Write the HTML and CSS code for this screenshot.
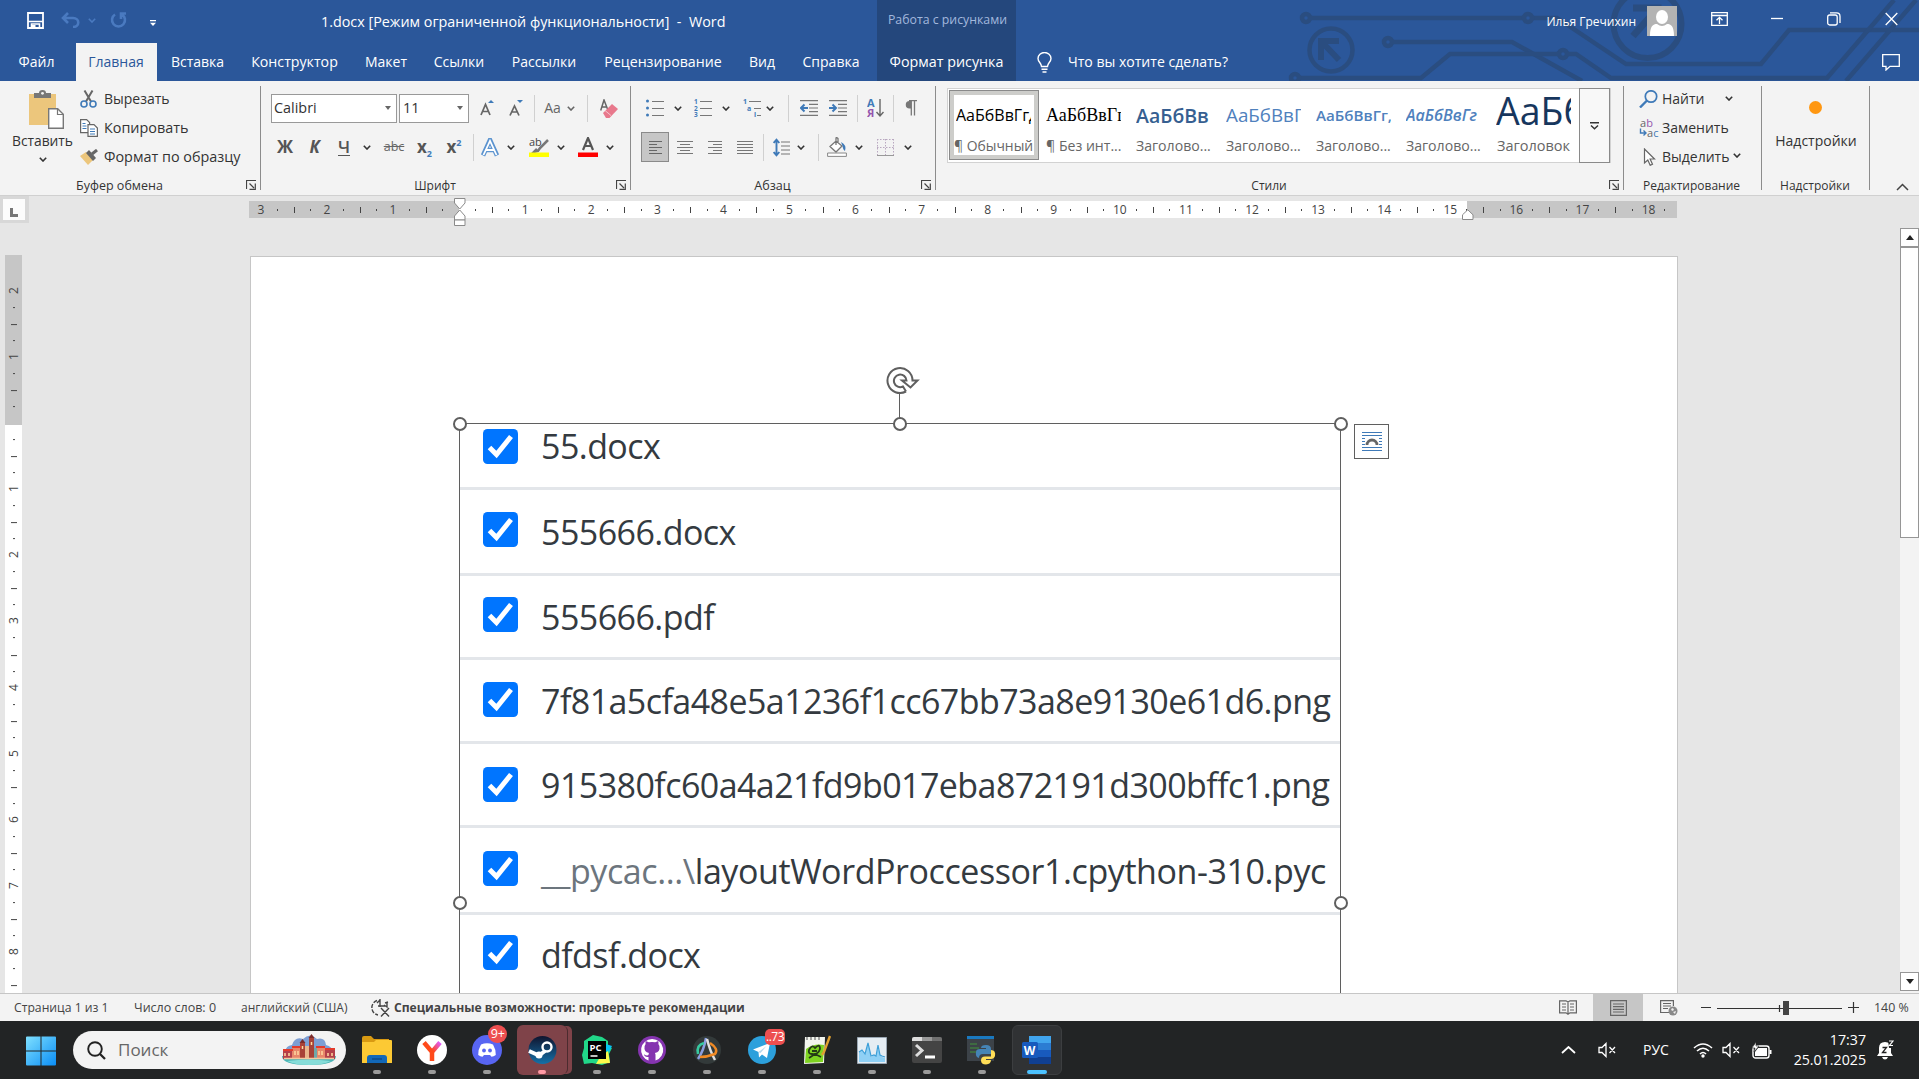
FILE: index.html
```html
<!DOCTYPE html>
<html lang="ru">
<head>
<meta charset="utf-8">
<title>1.docx - Word</title>
<link rel="stylesheet" href="styles.css">
</head>
<body>
<svg class="defs" width="0" height="0">
  <symbol id="chev" viewBox="0 0 8 5"><path d="M.8.8 4 4 7.2.8" fill="none" stroke="currentColor" stroke-width="1.6"/></symbol>
  <symbol id="launch" viewBox="0 0 10 10"><path d="M.5 9V.5H10M3.5 3.5 8 8M9.3 3.5v5.8H3.5" fill="none" stroke="#444" stroke-width="1.2"/></symbol>
  <symbol id="check" viewBox="0 0 35 35"><rect width="35" height="35" rx="4.5" fill="#0075ff"/><path d="M6.5 18.5 13.5 25.5 28 7.5" fill="none" stroke="#fff" stroke-width="5"/></symbol>
  <symbol id="mute" viewBox="0 0 18 16"><path d="M1 5.5h3L8 1.5v13L4 10.5H1ZM11.5 5l5.500 6M17 5l-5.500 6" fill="none" stroke="#fff" stroke-width="1.3"/></symbol>
</svg>

<header class="header">
  <svg class="circuit" width="649" height="81" viewBox="1270 0 649 81">
    <g fill="none" stroke="#2a4d80" stroke-width="4.5">
      <circle cx="1306" cy="18" r="4"/><path d="M1310 18H1524M1532 18H1557L1626 64H1761L1789 30H1919"/><circle cx="1528" cy="18" r="4"/>
      <circle cx="1388" cy="42" r="4"/><path d="M1392 42H1512L1582 81"/>
      <circle cx="1563" cy="54" r="4"/><path d="M1559 54H1450L1421 78H1299M1567 54H1576L1611 78H1827L1894 0M1846 81 1916 0"/><circle cx="1295" cy="78" r="4"/>
      <circle cx="1331" cy="50" r="21.5"/><circle cx="1647.5" cy="24" r="34" stroke-width="6"/>
      <path d="M1321 60V41H1339M1321 41 1339 60" stroke-width="6"/>
      <path d="M1633 8H1658V30M1657 9 1633 36" stroke-width="7"/>
    </g>
  </svg>
  <div class="titlebar">
    <div class="qat">
      <svg width="17" height="17" viewBox="0 0 17 17"><path d="M1 1h15v15H1z" fill="none" stroke="#fff" stroke-width="1.8"/><path d="M1 9.5h15M4.5 16v-4h8v4" fill="none" stroke="#fff" stroke-width="1.6"/><path d="M5 13h3.500v3H5z" fill="#fff"/></svg>
      <svg width="19" height="16" viewBox="0 0 19 16"><path d="M7 1 2 6l5 5M2.5 6H12c7 0 7 9 0 9" fill="none" stroke="#4a7ac0" stroke-width="2.6"/></svg>
      <svg class="dim" width="8" height="5"><use href="#chev"/></svg>
      <svg width="17" height="16" viewBox="0 0 17 16"><path d="M5 2.5A6.5 6.5 0 1 0 12 2.500M16 1.500H11V7" fill="none" stroke="#4a7ac0" stroke-width="2.6"/></svg>
      <svg width="6" height="6" viewBox="0 0 6 6"><path d="M0 0h6v1.300H0zM0 2.800h6L3 6z" fill="#fff"/></svg>
    </div>
    <div class="doc-title">1.docx [Режим ограниченной функциональности]&nbsp; -&nbsp; Word</div>
    <div class="context-title">Работа с рисунками</div>
    <div class="account">Илья Гречихин</div>
    <svg class="avatar" width="30" height="30" viewBox="0 0 30 30"><path fill="#b3b3b3" d="M0 0h30v30H0z"/><ellipse cx="15" cy="11" rx="6" ry="7" fill="#fff"/><path d="M3 30c0-10 3-12 7-12q5 4 10 0c4 0 7 2 7 12z" fill="#fff"/></svg>
    <svg class="win-opts" width="17" height="14" viewBox="0 0 17 14"><path d="M.7.7h15.600v12.600H.7zM.7 3.500h15.600M8.500 12V5.500M5.500 8.300l3-3 3 3" fill="none" stroke="#fff" stroke-width="1.3"/></svg>
    <svg class="win-min" width="12" height="14"><path d="M0 6.5h12" stroke="#fff" stroke-width="1.3"/></svg>
    <svg class="win-max" width="14" height="14" viewBox="0 0 14 14"><rect x=".7" y="3" width="9.5" height="10" rx="2" fill="none" stroke="#fff" stroke-width="1.3"/><path d="M3 .9h6.500q3.500 0 3.500 3.500V11" fill="none" stroke="#fff" stroke-width="1.3"/></svg>
    <svg class="win-close" width="13" height="14" viewBox="0 0 13 14"><path d="m.7 1 11.600 12M12.300 1 .7 13" stroke="#fff" stroke-width="1.3"/></svg>
  </div>
  <nav class="tabs">
    <span>Файл</span><span class="active">Главная</span><span>Вставка</span><span>Конструктор</span><span>Макет</span><span>Ссылки</span><span>Рассылки</span><span>Рецензирование</span><span>Вид</span><span>Справка</span><span class="context">Формат рисунка</span>
    <svg class="bulb" width="15" height="21" viewBox="0 0 15 21"><path d="M4.500 14.500C4.500 11 1 10 1 6.500a6.500 6 0 0 1 13 0C14 10 10.500 11 10.500 14.500ZM4.500 17.300h6M5.500 20h4" fill="none" stroke="#fff" stroke-width="1.4"/></svg>
    <div class="tellme">Что вы хотите сделать?</div>
    <svg class="comment" width="18" height="17" viewBox="0 0 18 17"><path d="M.7.7h16.600v11.600H8L4 16v-3.700H.7z" fill="none" stroke="#fff" stroke-width="1.3"/></svg>
  </nav>
</header>

<section class="ribbon">
  <div class="group g-clip">
    <div class="body">
      <div class="paste">
        <svg width="35" height="39" viewBox="0 0 35 39"><path d="M0 4h27v31H0z" fill="#ecc67c"/><path d="M5 8V3h5q0-3 3.500-3T17 3h5v5z" fill="#777"/><circle cx="13.500" cy="3.300" r="1.400" fill="#f3f3f3"/><path d="M19.700 18.700h9l5.600 5.600v14H19.700z" fill="#fff" stroke="#777" stroke-width="1.4"/><path d="M28.500 19v5.500H34" fill="none" stroke="#777" stroke-width="1.2"/></svg>
        <span>Вставить</span>
        <svg width="8" height="5"><use href="#chev"/></svg>
      </div>
      <div class="list">
        <div><svg width="18" height="18" viewBox="0 0 18 18"><path d="M4.500.5 11 11.500M12.500.5 6 11.500" stroke="#666" stroke-width="2"/><g fill="none" stroke="#3f7ab8" stroke-width="1.6"><circle cx="4" cy="14" r="3"/><circle cx="13" cy="14" r="3"/></g></svg>Вырезать</div>
        <div><svg width="18" height="18" viewBox="0 0 18 18"><g fill="#fff" stroke="#666" stroke-width="1.2"><path d="M.6.6h6l3 3v10h-9z"/><path d="M8 5.600h6l3.400 3.400v8.400H8z"/></g><path d="M2.500 4.500h3M2.500 7h4M2.500 9.500h4M10 10h5M10 12.500h5M10 15h5" stroke="#3f7ab8"/></svg>Копировать</div>
        <div><svg width="18" height="16" viewBox="0 0 18 16"><path d="M0 7 6 3l7 8-5 5z" fill="#ecc67c"/><path d="m6 4 3-3 7 8-3 3z" fill="#666"/><path d="m12 5 5-4" stroke="#666" stroke-width="3"/></svg>Формат по образцу</div>
      </div>
    </div>
    <footer><b>Буфер обмена</b><svg width="10" height="10"><use href="#launch"/></svg></footer>
  </div>

  <div class="group g-font">
    <div class="body">
      <div class="row font-top">
        <div class="combo">Calibri<i></i></div>
        <div class="combo">11<i></i></div>
        <svg width="15" height="16" viewBox="0 0 15 16"><path d="M1 15 5.500 4.500 10 15M2.500 11.500h6" fill="none" stroke="#666" stroke-width="1.7"/><path d="m8 3 3-3 3 3z" fill="#3f7ab8"/></svg>
        <svg width="15" height="16" viewBox="0 0 15 16"><path d="M1 15.500 5.500 6 10 15.500M2.500 12h6" fill="none" stroke="#666" stroke-width="1.7"/><path d="m8 0 3 3 3-3z" fill="#3f7ab8"/></svg>
        <hr>
        <span class="case">Аа<svg width="8" height="5"><use href="#chev"/></svg></span>
        <hr>
        <svg width="18" height="19" viewBox="0 0 18 19"><path d="M.7 11.500 4 1l3.500 9M2 8h4.500" fill="none" stroke="#666" stroke-width="1.5"/><path d="m3 14 9-9 6 5-8.500 9H6z" fill="#e8788c"/><path d="m5 11.500 6 5" stroke="#f6c5cd"/></svg>
      </div>
      <div class="row font-bottom">
        <b>Ж</b><b class="it">К</b><b class="un">Ч</b>
        <svg width="8" height="5"><use href="#chev"/></svg>
        <s>abc</s>
        <b>x<sub>2</sub></b><b>x<sup>2</sup></b>
        <hr>
        <svg width="18" height="19" viewBox="0 0 18 19"><path d="M2 17.500 9 2l7 15.500M5 12h8" fill="none" stroke="#5b93cf" stroke-width="4.6"/><path d="M2.500 17 9 2.800 15.500 17M5 12h8" fill="none" stroke="#fff" stroke-width="1.8"/></svg>
        <svg width="8" height="5"><use href="#chev"/></svg>
        <svg class="hl" width="20" height="20" viewBox="0 0 20 20"><text x="0" y="8.500" font-size="11" fill="#444">ab</text><path d="m19 3-8 8-2 3-4 1 3-3" fill="none" stroke="#777" stroke-width="2.5"/><path d="M0 15.500h20V20H0z" fill="#ff0"/></svg>
        <svg width="8" height="5"><use href="#chev"/></svg>
        <svg class="fc" width="20" height="20" viewBox="0 0 20 20"><path d="M5 13 10 1l5 12M6.500 9h7" fill="none" stroke="#555" stroke-width="2.2"/><path d="M0 15.500h20V20H0z" fill="red"/></svg>
        <svg width="8" height="5"><use href="#chev"/></svg>
      </div>
    </div>
    <footer><b>Шрифт</b><svg width="10" height="10"><use href="#launch"/></svg></footer>
  </div>

  <div class="group g-para">
    <div class="body">
      <div class="row para-top">
        <svg width="18" height="18" viewBox="0 0 18 18"><path d="M6 2.500h12M6 9.500h12M6 16.500h12" stroke="#777" stroke-width="1.2"/><g fill="#3f7ab8"><circle cx="1.500" cy="2" r="1.500"/><circle cx="1.500" cy="9" r="1.500"/><circle cx="1.500" cy="16" r="1.500"/></g></svg>
        <svg width="8" height="5"><use href="#chev"/></svg>
        <svg width="18" height="18" viewBox="0 0 18 18"><path d="M6 2.500h12M6 9.500h12M6 16.500h12" stroke="#777" stroke-width="1.2"/><g fill="#3f7ab8" font-size="6.500" font-weight="700"><text x="0" y="4.800">1</text><text x="0" y="11.500">2</text><text x="0" y="18">3</text></g></svg>
        <svg width="8" height="5"><use href="#chev"/></svg>
        <svg class="ml8" width="18" height="18" viewBox="0 0 18 18"><path d="M6 2.500h12M11 9.500h7M14 16.500h4" stroke="#777" stroke-width="1.2"/><g fill="#3f7ab8" font-size="7" font-weight="700"><text x="0" y="5">1</text><text x="4" y="12">a</text><text x="11" y="18">i</text></g></svg>
        <svg width="8" height="5"><use href="#chev"/></svg>
        <hr class="ml4">
        <svg width="18" height="16" viewBox="0 0 18 16"><path d="M0 .6h18M9 4.300h9M9 8h9M9 11.700h9M0 15.400h18" stroke="#777" stroke-width="1.2"/><path d="M8 8H2M4.500 4.500 1 8l3.500 3.500" fill="none" stroke="#3f7ab8" stroke-width="2"/></svg>
        <svg width="18" height="16" viewBox="0 0 18 16"><path d="M0 .6h18M9 4.300h9M9 8h9M9 11.700h9M0 15.400h18" stroke="#777" stroke-width="1.2"/><path d="M0 8h6M3.500 4.500 7 8l-3.500 3.500" fill="none" stroke="#3f7ab8" stroke-width="2"/></svg>
        <hr>
        <svg width="17" height="20" viewBox="0 0 17 20"><g font-size="11" font-weight="700"><text x="0" y="9" fill="#3f7ab8">А</text><text x="0" y="19" fill="#9356ad">Я</text></g><path d="M13 1v17M9.500 14l3.500 4 3.500-4" fill="none" stroke="#666" stroke-width="1.4"/></svg>
        <hr>
        <svg width="12" height="16" viewBox="0 0 12 16"><path d="M6 1H4.500a3.700 3.700 0 0 0 0 7.500H6z" fill="#777"/><path d="M6.300 15.500V1M9.500 15.500V1M4 .7h8" fill="none" stroke="#777" stroke-width="1.3"/></svg>
      </div>
      <div class="row para-bottom">
        <div class="pressed"><svg width="13" height="13" viewBox="0 0 13 13"><path d="M0 .5h13M0 3.500h8M0 6.500h13M0 9.500h8M0 12.500h13" stroke="#666"/></svg></div>
        <svg width="16" height="13" viewBox="0 0 16 13"><path d="M0 .5h16M3 3.500h10M0 6.500h16M3 9.500h10M0 12.500h16" stroke="#777"/></svg>
        <svg width="14" height="13" viewBox="0 0 14 13"><path d="M0 .5h14M5 3.500h9M0 6.500h14M5 9.500h9M0 12.500h14" stroke="#777"/></svg>
        <svg width="16" height="13" viewBox="0 0 16 13"><path d="M0 .5h16M0 3.500h16M0 6.500h16M0 9.500h16M0 12.500h16" stroke="#777"/></svg>
        <hr>
        <svg width="17" height="19" viewBox="0 0 17 19"><path d="M8 4h9M8 8h9M8 12h9M8 16h9" stroke="#777" stroke-width="1.2"/><path d="M3.500 2v15M.7 5l2.800-3.300L6.300 5M.7 14l2.800 3.300L6.300 14" fill="none" stroke="#3f7ab8" stroke-width="1.9"/></svg>
        <svg width="8" height="5"><use href="#chev"/></svg>
        <hr class="ml9">
        <svg width="20" height="20" viewBox="0 0 20 20"><path d="M3 9.500 9 4l6 5-6 6ZM9 8V1.500q0-2 2 0V5" fill="#fff" stroke="#777" stroke-width="1.3"/><path d="M14 5q6 3 4 9-2-1-2.500-5z" fill="#3f7ab8"/><path d="M.6 16h18.800v3.400H.6z" fill="#fff" stroke="#888"/></svg>
        <svg width="8" height="5"><use href="#chev"/></svg>
        <svg width="17" height="17" viewBox="0 0 17 17"><path d="M.5 0v16M8.500 0v16M16.500 0v16M0 .5h17M0 8.500h17" stroke="#b9a8c0" stroke-dasharray="1.500 1.500"/><path d="M0 16.500h17" stroke="#999"/></svg>
        <svg width="8" height="5"><use href="#chev"/></svg>
      </div>
    </div>
    <footer><b>Абзац</b><svg width="10" height="10"><use href="#launch"/></svg></footer>
  </div>

  <div class="group g-styles">
    <div class="body">
      <div class="gallery">
        <div class="style selected"><em>АаБбВвГгД</em><span>¶ Обычный</span></div>
        <div class="style s2"><em>АаБбВвГгД</em><span>¶ Без инт...</span></div>
        <div class="style s3"><em>АаБбВв</em><span>Заголово...</span></div>
        <div class="style s4"><em>АаБбВвГ</em><span>Заголово...</span></div>
        <div class="style s5"><em>АаБбВвГг,</em><span>Заголово...</span></div>
        <div class="style s6"><em>АаБбВвГг</em><span>Заголово...</span></div>
        <div class="style s7"><em>АаБб</em><span>Заголовок</span></div>
        <div class="more"><svg width="9" height="8" viewBox="0 0 9 8"><path d="M0 .7h9M1 3.500l3.500 3.300L8 3.500" fill="none" stroke="#333" stroke-width="1.4"/></svg></div>
      </div>
    </div>
    <footer><b>Стили</b><svg width="10" height="10"><use href="#launch"/></svg></footer>
  </div>

  <div class="group g-edit">
    <div class="body">
      <div class="list">
        <div><svg width="19" height="18" viewBox="0 0 19 18"><circle cx="11.500" cy="6.500" r="5.700" fill="none" stroke="#3f7ab8" stroke-width="1.7"/><path d="m7.500 10.500-7 7" stroke="#3f7ab8" stroke-width="2.4"/></svg>Найти<svg class="c1" width="8" height="5"><use href="#chev"/></svg></div>
        <div><svg width="20" height="20" viewBox="0 0 20 20"><g font-size="11"><text x="1" y="9" fill="#666">a<tspan fill="#9356ad">b</tspan></text><text x="8" y="19" fill="#666">a<tspan fill="#3f7ab8">c</tspan></text></g><path d="M1.500 10.500V15H7M4.500 12.500 7 15l-2.500 2.500" fill="none" stroke="#3f7ab8" stroke-width="1.4"/></svg>Заменить</div>
        <div><svg width="19" height="18" viewBox="0 0 19 18"><path d="M5 1v14l3.300-3 2.400 5.300 2.300-1-2.400-5.300H15z" fill="#fff" stroke="#666" stroke-width="1.2"/></svg>Выделить<svg class="c2" width="8" height="5"><use href="#chev"/></svg></div>
      </div>
    </div>
    <footer><b>Редактирование</b></footer>
  </div>

  <div class="group g-addins">
    <div class="body"><u></u><span>Надстройки</span></div>
    <footer><b>Надстройки</b></footer>
  </div>
  <svg class="collapse" width="13" height="8" viewBox="0 0 13 8"><path d="m1 7 5.500-5.500L12 7" fill="none" stroke="#444" stroke-width="1.5"/></svg>
</section>

<main class="workspace">
  <div class="ruler-row">
    <div class="tab-stop"><span><svg width="8" height="9" viewBox="0 0 8 9"><path d="M1.500 0v7.500H8" fill="none" stroke="#777" stroke-width="3"/></svg></span></div>
    <div class="hruler">
      <div class="track"><i>3</i><i>2</i><i>1</i><i></i><i>1</i><i>2</i><i>3</i><i>4</i><i>5</i><i>6</i><i>7</i><i>8</i><i>9</i><i>10</i><i>11</i><i>12</i><i>13</i><i>14</i><i>15</i><i>16</i><i>17</i><i>18</i></div>
    </div>
    <svg class="indent-left" width="12" height="30" viewBox="0 0 12 30"><g fill="#fff" stroke="#8a8a8a"><path d="M.5.500h10.500v4.500L5.750 11 .5 5z"/><path d="M5.750 12 11 18v4H.5v-4z"/><path d="M.5 22H11v5.500H.5z"/></g></svg>
    <svg class="indent-right" width="12" height="12" viewBox="0 0 12 12"><path d="m5.750.8 5.250 5v4.700H.5V5.800z" fill="#fff" stroke="#8a8a8a"/></svg>
  </div>
  <div class="doc-row">
    <div class="vruler"><i>2</i><i>1</i><i></i><i>1</i><i>2</i><i>3</i><i>4</i><i>5</i><i>6</i><i>7</i><i>8</i><i></i></div>
    <div class="canvas">
      <div class="page">
        <div class="picture">
          <div class="file"><svg width="35" height="35"><use href="#check"/></svg><span>55.docx</span></div>
          <div class="file"><svg width="35" height="35"><use href="#check"/></svg><span>555666.docx</span></div>
          <div class="file"><svg width="35" height="35"><use href="#check"/></svg><span>555666.pdf</span></div>
          <div class="file"><svg width="35" height="35"><use href="#check"/></svg><span>7f81a5cfa48e5a1236f1cc67bb73a8e9130e61d6.png</span></div>
          <div class="file"><svg width="35" height="35"><use href="#check"/></svg><span>915380fc60a4a21fd9b017eba872191d300bffc1.png</span></div>
          <div class="file"><svg width="35" height="35"><use href="#check"/></svg><span><small>__pycac...\</small>layoutWordProccessor1.cpython-310.pyc</span></div>
          <div class="file"><svg width="35" height="35"><use href="#check"/></svg><span>dfdsf.docx</span></div>
          <i class="handle tl"></i><i class="handle tc"></i><i class="handle tr"></i><i class="handle ml"></i><i class="handle mr"></i>
          <svg class="rotate" width="34" height="58" viewBox="0 0 34 58"><g fill="none" stroke="#5f5f5f"><path d="M13.500 27v24" stroke-width="1"/><path d="M20 24.500A12.500 12.500 0 1 1 26.500 13.500H31.500L24.500 20.500 16 13.500H20.500A6.300 6.300 0 1 0 17 19.500L20 24.500" stroke-width="2"/></g></svg>
          <div class="layout-btn"><svg width="20" height="19" viewBox="0 0 20 19"><path d="M0 .5h20M0 3.500h20M0 6.500h3M17 6.500h3M0 9.500h3M17 9.500h3M0 12.500h3M17 12.500h3M0 15.500h20M0 18.500h20" stroke="#3f7ab8"/><path d="M5 13a5 5 0 0 1 10 0" fill="none" stroke="#666" stroke-width="2.8"/></svg></div>
        </div>
      </div>
    </div>
    <div class="scroll"><span class="up"></span><span class="thumb"></span><span class="down"></span></div>
  </div>
</main>

<div class="status">
  <span class="st1">Страница 1 из 1</span><span class="st2">Число слов: 0</span><span class="st3">английский (США)</span>
  <svg width="20" height="18" viewBox="0 0 20 18"><path d="M6 1.500A7.500 7.500 0 0 0 7 16" fill="none" stroke="#444" stroke-width="1.4" stroke-dasharray="4 1.500"/><path d="M9 0v8M6 4l3-3M7 7h7M16 3v5l-3-2M17 3l-3 1M10 9l8 8.500M18 9l-8 8.500" fill="none" stroke="#444" stroke-width="1.4"/></svg>
  <b>Специальные возможности: проверьте рекомендации</b>
  <svg class="read" width="18" height="15" viewBox="0 0 18 15"><path d="M9 2v12.500M.6.800H7L9 2l2-1.200h6.400v12H11l-2 1.400-2-1.400H.6zM3 4h4M3 7h4M3 10h4M11 4h4M11 7h4M11 10h4" fill="none" stroke="#666" stroke-width="1.2"/></svg>
  <div class="view-on"><svg width="17" height="16" viewBox="0 0 17 16"><path d="M.6.600h15.800v14.800H.6zM3 4h11M3 6.700h11M3 9.300h11M3 12h11" fill="none" stroke="#666" stroke-width="1.2"/></svg></div>
  <svg class="web" width="18" height="16" viewBox="0 0 18 16"><path d="M9 12.500H.6V.6h12.800V6M3 3.500h8M3 6h8M3 8.500h5" fill="none" stroke="#666" stroke-width="1.2"/><circle cx="13" cy="11" r="4.500" fill="#888"/><path d="m11 9 2-1 1 2-2 1zM13 12l3-1-1 3z" fill="#eee"/></svg>
  <svg class="zoom" width="158" height="16" viewBox="0 0 158 16"><path d="M0 7.500h10M147 7.500h11M152.500 2v11M16 8.500h125M78.500 5v7" stroke="#333" stroke-width="1.2"/><path d="M82 1h6v14h-6z" fill="#444"/></svg>
  <span class="pct">140 %</span>
</div>

<div class="taskbar">
  <svg class="start" width="30" height="30" viewBox="0 0 30 30"><defs><linearGradient id="win" x1="0" y1="0" x2="1" y2="1"><stop offset="0" stop-color="#7fe0ff"/><stop offset="1" stop-color="#0a8df5"/></linearGradient></defs><path d="M0 1.500Q0 .5 1 .5h13.500V14.500H0zM15.500.5H29q1 0 1 1v13H15.500zM0 15.500h14.500V29.500H1q-1 0-1-1zM15.500 15.500H30v13q0 1-1 1H15.500z" fill="url(#win)"/></svg>
  <div class="search">
    <svg width="19" height="19" viewBox="0 0 19 19"><circle cx="8" cy="8" r="6.800" fill="none" stroke="#222" stroke-width="1.9"/><path d="m13 13 5 5" stroke="#222" stroke-width="2.3"/></svg>
    <span>Поиск</span>
    <svg width="56" height="32" viewBox="0 0 56 32"><path d="M5 20q-2-8 6-9 3-9 11-6Q29-2 36 5q8-2 9 6 8 2 6 9z" fill="#7d9fd4"/><path d="M1 22h54q0 9-27 9T1 22z" fill="#4cb5b5"/><path d="M6 27q22-3 44 0-8 4-22 4T6 27z" fill="#86dcd8"/><path d="M2 16h10v9H2zM44 15h10v10H44z" fill="#b3404a"/><path d="M11 13h9v12h-9zM35 13h9v12h-9z" fill="#e8876a"/><path d="M19 9h5v16h-5zM28 4h5v21h-5z" fill="#a84238"/><path d="M24 12h4v13h-4z" fill="#e9b58c"/><path d="M33 14h3v11h-3z" fill="#6fa8a8"/><path d="m27.500 4 3-4 3 4zM18.500 9l3-4 3 4z" fill="#7c2b2b"/><path d="M2 16h10M11 13h9M35 13h9M44 15h10" stroke="#e33b2c" stroke-width="2"/><path d="M4 19v3M8 19v3M14 17v4M17 17v4M38 17v4M41 17v4M47 19v3M51 19v3M30.500 8v3M21.500 12v3" stroke="#ffd9a0" stroke-width="1.5"/><path d="M3 24.500h50" stroke="#f5c9a0" stroke-width="1.5"/></svg>
  </div>
  <div class="apps">
    <div><svg width="30" height="28" viewBox="0 0 30 28"><path d="M0 2q0-2 2-2h7l3 3h15v6H0z" fill="#d99a12"/><path d="M0 6h12l2-2h15q1 0 1 1v22H0z" fill="#fcc934"/><path d="M5 27v-5q0-3 3-3h14q3 0 3 3v5z" fill="#1268b8"/><path d="M10 23h10" stroke="#0c4a8a" stroke-width="1.5"/></svg></div>
    <div><svg width="30" height="30" viewBox="0 0 30 30"><defs><linearGradient id="ya" x1="0" x2="1" y1="1" y2="0"><stop offset=".55" stop-color="#ff4a1a"/><stop offset="1" stop-color="#e05cff"/></linearGradient></defs><circle cx="15" cy="15" r="15" fill="#fff"/><path d="M7 7.500 15 17 23 7.500M15 16v10" fill="none" stroke="url(#ya)" stroke-width="4.5"/></svg></div>
    <div class="bub"><svg width="30" height="30" viewBox="0 0 30 30"><circle cx="15" cy="15" r="15" fill="#5865f2"/><path d="M9 9.500q6-2.500 12 0 3 5 2.800 10.500-2.300 1.800-4.300 1.800L18 20h-6l-1.500 1.800q-2 0-4.300-1.800Q6 14.500 9 9.500z" fill="#fff"/><circle cx="12" cy="15.500" r="1.900" fill="#5865f2"/><circle cx="18" cy="15.500" r="1.900" fill="#5865f2"/></svg><em>9+</em></div>
    <div class="steam"><svg width="29" height="28" viewBox="0 0 29 28"><defs><linearGradient id="st" x2="0" y2="1"><stop offset="0" stop-color="#10142e"/><stop offset="1" stop-color="#1571a8"/></linearGradient></defs><circle cx="14.500" cy="14" r="14" fill="url(#st)"/><circle cx="19" cy="11" r="4.500" fill="none" stroke="#fff" stroke-width="2.4"/><path d="m1 15 10 4.500L17 15" fill="none" stroke="#fff" stroke-width="4"/><circle cx="11" cy="19" r="3.500" fill="#fff"/></svg></div>
    <div><svg width="30" height="30" viewBox="0 0 30 30"><path d="m2 6 9-6 9 2 6 4v6l4 1-3 6 1 8-8 3-10-2-8 1-2-9 2-7z" fill="#21d789"/><path d="m24 9 6 2-3 6-4-1z" fill="#07c3f2"/><path d="m18 22 8-6 2 12-14 1z" fill="#fcf84a"/><path d="M6 6h18v18H6z" fill="#000"/><text x="7.500" y="15.500" font-size="9.500" font-weight="700" fill="#fff">PC</text><path d="M8.500 21h7" stroke="#fff" stroke-width="1.5"/></svg></div>
    <div><svg width="28" height="28" viewBox="0 0 28 28"><circle cx="14" cy="14" r="14" fill="#8534b0"/><path d="M14 3a11 11 0 0 0-3.500 21.400v-3.500q-4 .6-4.500-2.700 3 2 4.600.6-.3-1 .5-1.800-5.500-1-4.500-7l1-2q-.3-1.500.2-3l3 1.300q3.200-.8 6.400 0l3-1.300q.5 1.500.2 3l1 2q1 6-4.500 7 .8 1 .6 2.500v5A11 11 0 0 0 14 3z" fill="#fff"/></svg></div>
    <div><svg width="28" height="28" viewBox="0 0 28 28"><circle cx="14" cy="14" r="14" fill="#333a3a"/><path d="M5 23Q11 14 13 2" fill="none" stroke="#8b9fe0" stroke-width="2.5"/><path d="M14 3q3 12 8 21" fill="none" stroke="#e0e0e0" stroke-width="2.5"/><path d="M5 18Q3 9 11 7" fill="none" stroke="#37c9a0" stroke-width="2.5"/><path d="M17 7q9 6 5 11-8 3-15 3" fill="none" stroke="#f08a24" stroke-width="2.5"/></svg></div>
    <div class="bub tg"><svg width="28" height="28" viewBox="0 0 28 28"><circle cx="14" cy="14" r="14" fill="#2ca0dc"/><path d="M5 13.500 22 7l-3 15-5-3.500-3 3-.5-5.500z" fill="#fff"/><path d="m10.500 16 8-6-6 7z" fill="#b5d8ec"/></svg><em>..73</em></div>
    <div><svg width="28" height="30" viewBox="0 0 28 30"><path d="M2 2h20l-1 26-20 1z" fill="#f3f5ee"/><path d="M3 14q8-6 18-4l-1 17-18 1z" fill="#7ed321"/><path d="M4 2v3M8 2v3M12 2v3M16 2v3" stroke="#888" stroke-width="1.5"/><path d="M6 15q3-6 6-2 5-5 5 1-2 6-8 5-4 0-3-4zM6 23l6-4 6 3M9 16h5" fill="none" stroke="#243a16" stroke-width="1.8"/><path d="M27 1 21 17l-2 3" stroke="#e0a030" stroke-width="2.4" fill="none"/></svg></div>
    <div><svg width="30" height="27" viewBox="0 0 30 27"><path d="M.5.500h29v26H.5z" fill="#e6edf3" stroke="#9aa7b3"/><path d="M2 25V15l3-2 3 4 3-10 3 13 3-2 2 1 2-9 2 8 2 2 3 1v4z" fill="#8fd0f5"/><path d="m2 15 3-2 3 4 3-11 3 13 3-1 2 1 2-11 2 10 2 1 3 1" fill="none" stroke="#3d9fd8" stroke-width="1.2"/></svg></div>
    <div><svg width="30" height="26" viewBox="0 0 30 26"><rect width="30" height="26" rx="2" fill="#444"/><path d="M0 2q0-2 2-2h8v4H0z" fill="#ddd"/><path d="M10 0h10v4H10z" fill="#999"/><path d="M20 0h8q2 0 2 2v2H20z" fill="#707070"/><path d="m4 8 6 5.500L4 19" fill="none" stroke="#ddd" stroke-width="3"/><path d="M13 20h10" stroke="#fff" stroke-width="3"/></svg></div>
    <div><svg width="29" height="30" viewBox="0 0 29 30"><path d="M0 1h27v25H0z" fill="#3c4248"/><path d="M0 1h27v3H0z" fill="#1a79c0"/><path d="M3 9h7M3 13h9M3 17h6" stroke="#3f7a3f" stroke-width="1.3"/><path d="M19 10q5 0 5 4v5h-8q-4 0-4 4-4-1-3-6 0-3 4-3h6v-1h-5q0-3 5-3z" fill="#4584b6"/><path d="M24 15q5 0 4 6-1 3-4 3h-5v1h5q0 4-5 4.500-5 0-5-4t4-4h6z" fill="#ffde57"/></svg></div>
    <div class="word"><svg width="29" height="28" viewBox="0 0 29 28"><path d="M7 0h22v7H7z" fill="#41a5ee"/><path d="M7 7h22v7H7z" fill="#2b7cd3"/><path d="M7 14h22v7H7z" fill="#185abd"/><path d="M7 21h22v7H7z" fill="#103f91"/><rect y="6" width="16" height="16" rx="1.500" fill="#185abd"/><text x="1.800" y="18.500" font-size="12" font-weight="700" fill="#fff">W</text></svg></div>
  </div>
  <div class="tray">
    <svg width="15" height="8" viewBox="0 0 15 8"><path d="m1 7 6.500-6L14 7" fill="none" stroke="#fff" stroke-width="1.8"/></svg>
    <svg class="t2" width="18" height="16"><use href="#mute"/></svg>
    <span class="lang">РУС</span>
    <svg class="t4" width="20" height="16" viewBox="0 0 20 16"><path d="M1 6q9-8 18 0M4 9q6-5.500 12 0M7 12q3-3 6 0" fill="none" stroke="#fff" stroke-width="1.6"/><circle cx="10" cy="14" r="1.700" fill="#fff"/></svg>
    <svg class="t5" width="18" height="16"><use href="#mute"/></svg>
    <svg class="t6" width="20" height="17" viewBox="0 0 20 17"><rect x="1" y="4" width="16" height="12" rx="2.500" fill="none" stroke="#fff" stroke-width="1.4"/><path d="M6 6h9v8H3v-4z" fill="#fff"/><path d="M18.500 8v4" stroke="#fff" stroke-width="2"/><path d="M4 0 0 6h3l-1 4 5-6H4z" fill="#fff" stroke="#222" stroke-width=".6"/></svg>
    <div class="clock"><span>17:37</span><span>25.01.2025</span></div>
    <svg class="t8" width="17" height="20" viewBox="0 0 17 20"><path d="M0 16 2 13V8q0-6 6-6t6 6v5l2 3zM5 17h6q-1 2.500-3 2.500T5 17z" fill="#fff"/><path d="M5.500 7.500h4l-4 5h4" fill="none" stroke="#222" stroke-width="1.3"/><path d="M11 0h6v8h-5z" fill="#222425"/><path d="M12 1h4l-3.500 4.500H16" fill="none" stroke="#fff" stroke-width="1.2"/></svg>
  </div>
</div>
</body>
</html>
```
FILE: styles.css
```css
* { box-sizing: border-box; }
body { margin: 0; width: 1919px; height: 1079px; overflow: hidden; display: flex; flex-direction: column; font: 14px/20px "Open Sans", "Noto Sans", sans-serif; color: #333; background: #e6e6e6; }
svg { display: block; flex: none; }
svg text { font-family: "Open Sans", "Noto Sans", sans-serif; }
.defs { position: absolute; }
i, em { font-style: normal; }

/* title bar and tabs */
.header { position: relative; height: 81px; flex: none; background: #2b579a; color: #fff; }
.circuit { position: absolute; right: 0; top: 0; }
.titlebar { position: relative; display: flex; height: 43px; }
.qat { width: 321px; display: flex; align-items: flex-start; padding: 12px 0 0 27px; }
.qat svg:nth-child(2) { margin-left: 17px; }
.qat svg:nth-child(3) { margin: 6px 0 0 8px; }
.qat svg:nth-child(4) { margin-left: 14px; }
.qat svg:nth-child(5) { margin: 8px 0 0 23px; }
.dim { color: #4a7ac0; }
.doc-title { width: 556px; padding-top: 12px; font-size: 14.35px; white-space: nowrap; }
.context-title { width: 139px; height: 43px; padding: 10px 0 0 2px; background: #24477c; color: #a3b8dc; font-size: 12.3px; text-align: center; white-space: nowrap; }
.account { margin-left: auto; padding-top: 12px; font-size: 12px; }
.avatar { margin: 6px 0 0 11px; }
.win-opts { margin: 12px 0 0 34px; }
.win-min { margin: 12px 0 0 43px; }
.win-max { margin: 12px 0 0 44px; }
.win-close { margin: 12px 21px 0 44px; }
.tabs { position: relative; display: flex; height: 38px; line-height: 37px; }
.tabs span { width: 81px; text-align: center; white-space: nowrap; }
.tabs span:nth-child(1) { width: 76px; padding-right: 3px; }
.tabs span:nth-child(2) { padding-right: 1px; }
.tabs span:nth-child(4) { width: 114px; padding-right: 1px; font-size: 14.2px; }
.tabs span:nth-child(5) { width: 68px; }
.tabs span:nth-child(6) { width: 78px; }
.tabs span:nth-child(7) { width: 92px; }
.tabs span:nth-child(8) { width: 146px; font-size: 14.2px; }
.tabs span:nth-child(9) { width: 52px; }
.tabs span:nth-child(10) { width: 89px; padding-right: 3px; }
.tabs .active { background: #f3f3f3; color: #2b579a; }
.tabs .context { width: 139px; background: #24477c; font-size: 14.3px; }
.bulb { margin: 9px 0 0 21px; }
.tellme { margin-left: 16px; font-size: 14.05px; }
.comment { margin: 11px 19px 0 auto; }

/* ribbon */
.ribbon { position: relative; display: flex; height: 115px; flex: none; background: #f3f3f3; border-bottom: 1px solid #d0d0d0; }
.group { position: relative; display: flex; flex-direction: column; }
.group::after { content: ""; position: absolute; right: 0; top: 5px; bottom: 5px; width: 1px; background: #8c8c8c; }
.body { height: 95px; display: flex; }
.group footer { display: flex; height: 19px; line-height: 19px; font-size: 12px; color: #333; }
.group footer b { flex: 1; text-align: center; font-weight: 400; }
.group footer svg { margin: 4px 5px 0 7px; }
.g-clip { width: 261px; }
.g-font { width: 370px; }
.g-para { width: 305px; }
.g-styles { width: 688px; }
.g-edit { width: 138px; }
.g-addins { width: 108px; }
.g-clip footer b { font-size: 12.5px; }
.g-para footer b { font-size: 12.6px; }
.g-edit footer b { padding-right: 3px; }
.g-addins footer b { padding-right: 2px; }
.paste { width: 80px; display: flex; flex-direction: column; align-items: center; padding: 9px 0 0 5px; }
.paste svg:first-child { margin-right: -8px; }
.paste span { margin: 2px 0 6px; font-size: 13.8px; }
.list { padding-top: 3px; }
.list div { display: flex; align-items: center; height: 29px; white-space: nowrap; }
.list div svg:first-child { margin-right: 6px; }
.g-clip .list div:nth-child(n+2) { font-size: 14.4px; }
.g-edit .list { padding-left: 15px; }
.g-edit .list div svg:first-child { width: 20px; margin-right: 3px; }
.c1 { margin-left: 20px; }
.c2 { margin-left: 4px; margin-top: -3px; }
.g-font .body, .g-para .body { flex-direction: column; padding: 12px 0 0 10px; gap: 9px; }
.row { display: grid; height: 30px; align-items: center; justify-items: center; }
.row hr { width: 1px; height: 27px; margin: 0; border: 0; background: #d0d0d0; }
.row b { color: #555; font-size: 17px; }
.font-top { grid-template-columns: 128px 70px 36px 22px 14px 37px 19px 23px; }
.font-bottom { grid-template-columns: 28px 31px 28px 17px 38px 23px 36px 3px 30px 11px 38px 14px 36px 12px; }
.para-top { grid-template-columns: 28px 17px 34px 12px 32px 12px 21px 23px 36px 3px 33px 3px 32px; }
.para-bottom { grid-template-columns: 28px 32px 28px 32px 5px 31px 8px 18px 28px 16px 37px 8px; }
.combo { display: flex; align-items: center; justify-content: space-between; justify-self: start; width: 126px; height: 29px; padding: 0 5px 0 2px; border: 1px solid #999; background: #fff; font-size: 14.4px; }
.combo + .combo { width: 70px; padding-left: 3px; }
.combo i { border: 3.5px solid transparent; border-top: 4px solid #666; border-bottom: 0; }
.case { display: flex; align-items: center; gap: 6px; color: #666; }
.row .it { font-style: italic; }
.row .un { line-height: 17px; border-bottom: 1px solid #555; font-weight: 600; }
.row s { font-size: 12.5px; color: #666; }
.row sub, .row sup { font-size: 9px; line-height: 0; color: #3f7ab8; }
.row .hl, .row .ml8 { margin-left: 8px; }
.row .fc, .row .ml4 { margin-left: 4px; }
.row .ml9 { margin-left: 9px; }
.pressed { display: grid; place-items: center; width: 28px; height: 30px; background: #c6c6c6; border: 1px solid #8a8a8a; }
.g-styles .body { padding: 7px 0 0 11px; }
.gallery { display: flex; width: 664px; height: 75px; padding: 1px 0 0 1px; border: 1px solid #d2d2d2; background: #fff; }
.style { width: 90px; height: 70px; padding: 5px 0 0 7px; }
.style em { display: block; width: 75px; height: 41px; line-height: 41px; font-size: 16px; overflow: hidden; white-space: nowrap; color: #000; }
.style span { display: block; width: 80px; font-size: 14.1px; color: #666; white-space: nowrap; }
.selected { padding: 0 0 0 3px; border: 1px solid #8a8a8a; box-shadow: inset 0 0 0 4px #cdcdca; }
.selected em { margin: 4px 0 0 3px; }
.selected span { margin-left: 1px; font-size: 13.9px; }
.s2 em { font-family: "Liberation Serif", serif; font-size: 18px; }
.s3 em { color: #365f91; font-size: 19.5px; font-weight: 600; }
.s4 em { color: #4f81bd; font-size: 18.8px; }
.s5 em { color: #4f81bd; font-size: 15.2px; font-weight: 600; }
.s6 em { color: #4f81bd; font-size: 16px; font-weight: 600; font-style: italic; }
.s7 em { color: #17365d; font-size: 37.5px; line-height: 32px; }
.s7 span { font-size: 14.5px; margin-left: 1px; }
.more { display: grid; place-items: center; width: 31px; height: 75px; margin: -2px -1px 0 0; border: 1px solid #8a8a8a; background: #f8f8f8; }
.g-addins .body { flex-direction: column; align-items: center; }
.g-addins u { width: 13px; height: 13px; margin: 20px 2px 17px 0; border-radius: 50%; background: #ff9711; }
.collapse { margin: 102px 0 0 26px; }

/* rulers */
.workspace { height: 797px; flex: none; display: flex; flex-direction: column; }
.ruler-row { position: relative; display: flex; height: 32px; }
.tab-stop { width: 29px; height: 27px; padding: 3px; background: #d8d8d8; }
.tab-stop span { display: block; width: 22px; height: 21px; padding: 9px 0 0 7px; background: #fcfcfc; }
.hruler { width: 1428px; height: 17px; margin: 5px 0 0 220px; overflow: hidden; background: linear-gradient(90deg, #c6c6c6 210px, #fff 210px 1218px, #c6c6c6 1218px); }
.track { display: flex; width: 1454px; margin-left: -21.2px; }
.track i { width: 66.08px; height: 17px; flex: none; line-height: 17px; text-align: center; font-size: 12px; color: #444; background: linear-gradient(#444, #444) 0 6px / 1px 6px no-repeat, linear-gradient(#444, #444) 25% 8px / 1px 2px no-repeat, linear-gradient(#444, #444) 75% 8px / 1px 2px no-repeat; }
.indent-left { position: absolute; left: 454px; top: 2px; }
.indent-right { position: absolute; left: 1462px; top: 13px; }
.doc-row { display: flex; height: 765px; overflow: hidden; }
.vruler { width: 17px; margin: 27px 0 0 5px; padding-top: 3px; background: linear-gradient(#c6c6c6 170px, #fff 170px); }
.vruler i { display: grid; place-items: center; width: 17px; height: 66.1px; line-height: 17px; font-size: 12px; color: #444; writing-mode: vertical-rl; transform: rotate(180deg); background: linear-gradient(#444, #444) 5px 100% / 6px 1px no-repeat, linear-gradient(#444, #444) 7px 25% / 2px 1px no-repeat, linear-gradient(#444, #444) 7px 75% / 2px 1px no-repeat; }
.vruler i:first-child { background: linear-gradient(#444, #444) 7px 25% / 2px 1px no-repeat; }

/* page */
.canvas { flex: 1; padding: 28px 0 0 228px; }
.page { width: 1428px; height: 900px; padding: 167px 0 0 209px; background: #fff; border: 1px solid #c6c6c6; }
.picture { position: relative; width: 882px; height: 960px; margin: -1px 0 0 -1px; border: 1px solid #5f5f5f; background: #fff; }
.file { display: flex; height: 84px; padding-left: 23px; border-bottom: 3px solid #e3e6ea; font-size: 34px; line-height: 40px; letter-spacing: -.56px; color: #343a40; white-space: nowrap; }
.file svg { margin: 22px 23px 0 0; }
.file span { margin-top: 21px; }
.file small { font-size: 34px; color: #6c757d; }
.file:nth-child(1) { height: 66px; }
.file:nth-child(1) svg { margin-top: 5px; }
.file:nth-child(1) span { margin-top: 2px; }
.file:nth-child(2) { height: 86px; }
.file:nth-child(2) span { margin-top: 22px; }
.file:nth-child(3) svg { margin-top: 21px; }
.file:nth-child(5) svg { margin-top: 23px; }
.file:nth-child(6) { height: 87px; letter-spacing: -.42px; }
.file:nth-child(6) svg { margin-top: 23px; }
.file:nth-child(6) span { margin-top: 23px; }
.file:nth-child(7) svg { margin-top: 20px; }
.file:nth-child(7) span { margin-top: 20px; }
.handle { position: absolute; width: 14px; height: 14px; border: 2px solid #5f5f5f; border-radius: 50%; background: #fff; }
.tl { left: -7px; top: -7px; }
.tc { left: 433px; top: -7px; }
.tr { right: -8px; top: -7px; }
.ml { left: -7px; top: 472px; }
.mr { right: -8px; top: 472px; }
.rotate { position: absolute; left: 426px; top: -57px; }
.layout-btn { position: absolute; left: 894px; top: 0; display: grid; place-items: center; width: 35px; height: 35px; border: 1px solid #5f5f5f; background: #fff; }
.scroll { width: 19px; display: flex; flex-direction: column; background: #f3f3f3; }
.scroll span { border: 1px solid #969696; background: #fff; }
.up, .down { display: grid; place-items: center; height: 19px; }
.up::after, .down::after { content: ""; border: 4.5px solid transparent; border-bottom: 5px solid #222; border-top: 0; }
.down::after { border-top: 5px solid #222; border-bottom: 0; }
.thumb { height: 291px; }
.down { margin: auto 0 2px; }

/* status bar */
.status { display: flex; align-items: center; height: 28px; flex: none; padding-left: 14px; border-top: 1px solid #c6c6c6; background: #f3f3f3; font-size: 12px; color: #444; white-space: nowrap; }
.st1 { width: 120px; font-size: 12.2px; }
.st2 { width: 107px; font-size: 12.5px; }
.st3 { width: 130px; }
.status b { margin-left: 3px; font-size: 12.1px; }
.read { margin-left: auto; }
.view-on { display: grid; place-items: center; width: 50px; height: 27px; margin-left: 16px; background: #c6c6c6; }
.web { margin-left: 17px; }
.zoom { margin-left: 23px; }
.pct { width: 36px; margin: 0 9px 0 15px; font-size: 12.4px; }

/* taskbar */
.taskbar { display: flex; height: 58px; flex: none; background: #222425; color: #fff; }
.start { margin: 15px 0 0 26px; }
.search { display: flex; align-items: center; width: 273px; height: 38px; margin: 10px 0 0 17px; padding-left: 14px; border-radius: 19px; background: #f3f3f3; font-size: 17px; color: #666; }
.search span { width: 175px; padding-left: 12px; }
.apps { display: flex; margin-left: 4px; }
.apps div { position: relative; display: grid; place-items: center; width: 50px; height: 50px; margin: 4px 2.48px 0; border-radius: 6px; }
.apps div::after { content: ""; position: absolute; left: 21px; bottom: 1px; width: 8px; height: 4px; border-radius: 2px; background: #9a9a9a; }
.apps em { position: absolute; left: 26px; top: 0; width: 19px; height: 18px; border-radius: 9px; background: #ed4f50; font-size: 12.5px; line-height: 17px; text-align: center; }
.apps .tg em { left: 28px; top: 4px; width: 20px; height: 16px; border-radius: 5px; font-size: 12px; line-height: 15px; letter-spacing: -.5px; }
.apps .steam { background: #7f4349; box-shadow: 2px 0 0 -1px #4c2b2f, 6px 0 0 -1px #7f4349; }
.apps .steam::after { background: #ff99a4; }
.apps .word { background: #303234; border: 1px solid #3c3e40; }
.apps .word::after { left: 14px; bottom: 0; width: 20px; background: #4cc2ff; }
.tray { display: flex; align-items: center; margin-left: auto; height: 58px; padding-right: 25px; }
.tray svg:first-child { margin-left: -1px; }
.t2 { margin-left: 22px; }
.lang { width: 26px; margin-left: 27px; }
.t4 { margin-left: 24px; }
.t5 { margin-left: 9px; }
.t6 { margin-left: 12px; }
.clock { display: flex; flex-direction: column; width: 94px; text-align: right; font-size: 14.2px; }
.t8 { margin-left: 11px; }
```
